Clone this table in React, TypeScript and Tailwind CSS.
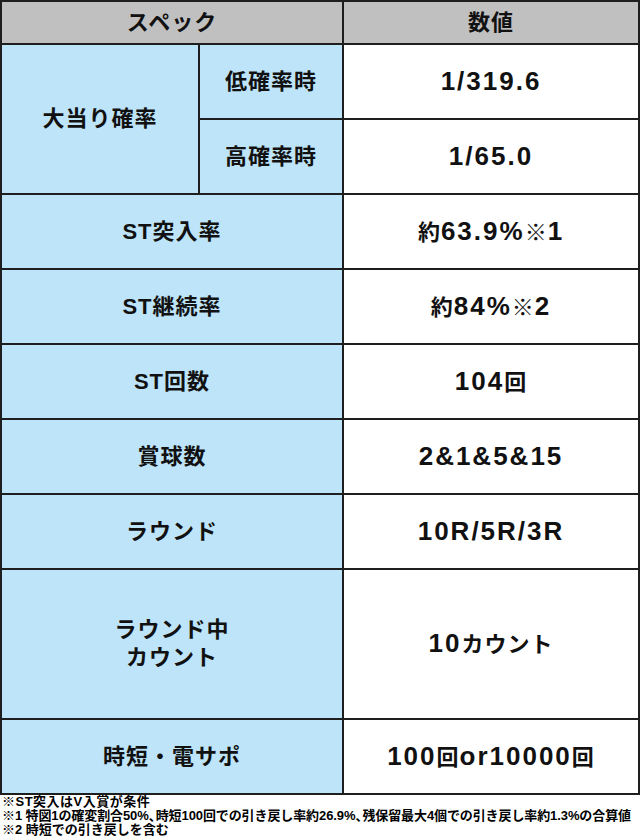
import React from "react";

const F = { fontFamily: '"Liberation Sans","Noto Sans CJK JP",sans-serif' };

function Cell({ children, className = "" }: { children: React.ReactNode; className?: string }) {
  return (
    <div className={"flex items-center justify-center text-center font-bold text-[22px] leading-[28px] text-[#111] tracking-[1px] " + className}>
      {children}
    </div>
  );
}

function Val({ text }: { text: string }) {
  const parts = text.match(/[\x20-\x7e]+|[^\x20-\x7e]+/g) || [];
  return (
    <span className="whitespace-nowrap">
      {parts.map((p, i) =>
        /^[\x20-\x7e]+$/.test(p) ? (
          <span key={i} className="text-[26px] tracking-[2px]">
            {p}
          </span>
        ) : (
          <span key={i} className="text-[22px] tracking-[1px]">
            {p}
          </span>
        )
      )}
    </span>
  );
}

export default function App() {
  const rows: [React.ReactNode, string][] = [
    ["ST突入率", "約63.9%※1"],
    ["ST継続率", "約84%※2"],
    ["ST回数", "104回"],
    ["賞球数", "2&1&5&15"],
    ["ラウンド", "10R/5R/3R"],
    [
      <>
        ラウンド中
        <br />
        カウント
      </>,
      "10カウント",
    ],
    ["時短・電サポ", "100回or10000回"],
  ];
  return (
    <div className="w-[640px] bg-white" style={F}>
      <div className="grid w-[640px] grid-cols-[196px_142px_294px] grid-rows-[41px_73px_73px_73px_73px_73px_73px_73px_148px_73px] gap-[2px] bg-[#1e1e1e] p-[2px]">
        <Cell className="col-span-2 bg-[#c0c0c0] text-[21px]">スペック</Cell>
        <Cell className="bg-[#c0c0c0] text-[21px]">数値</Cell>
        <Cell className="row-span-2 bg-[#bde4f8]">大当り確率</Cell>
        <Cell className="bg-[#bde4f8]">低確率時</Cell>
        <Cell className="bg-white">
          <Val text="1/319.6" />
        </Cell>
        <Cell className="bg-[#bde4f8]">高確率時</Cell>
        <Cell className="bg-white">
          <Val text="1/65.0" />
        </Cell>
        {rows.map(([l, v], i) => (
          <React.Fragment key={i}>
            <Cell className="col-span-2 bg-[#bde4f8]">{l}</Cell>
            <Cell className="bg-white">
              <Val text={v} />
            </Cell>
          </React.Fragment>
        ))}
      </div>
      <div className="px-[2px] text-[13px] leading-[14px] font-bold text-black whitespace-nowrap">
        <div className="tracking-[0.5px]">※ST突入はV入賞が条件</div>
        <div className="tracking-[-0.1px]">
          ※1 特図1の確変割合50%<span className="tracking-[-6px]">、</span>時短100回での引き戻し率約26.9%
          <span className="tracking-[-6px]">、</span>残保留最大4個での引き戻し率約1.3%の合算値
        </div>
        <div>※2 時短での引き戻しを含む</div>
      </div>
    </div>
  );
}
